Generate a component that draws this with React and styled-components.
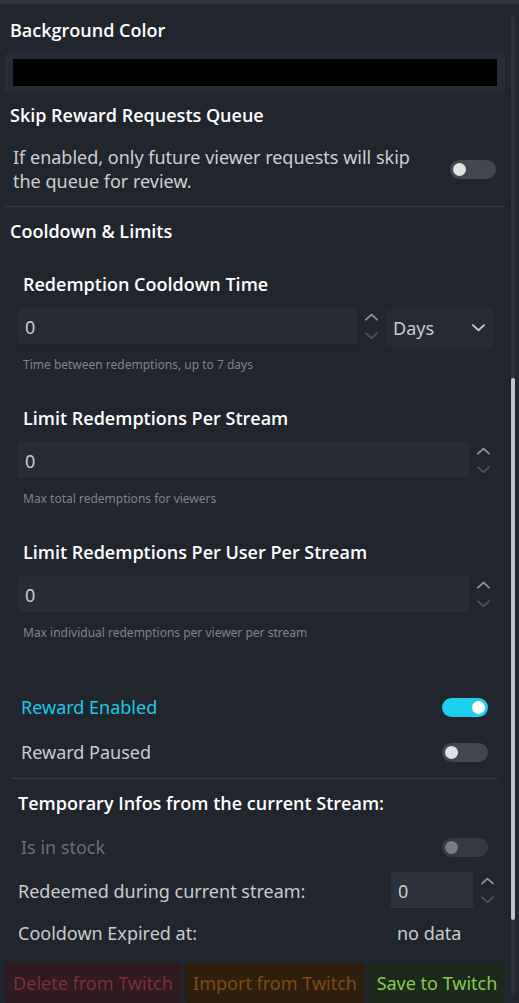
import React from 'react';
import styled, {createGlobalStyle} from 'styled-components';

const GlobalStyle = createGlobalStyle`
  html, body {
    margin: 0;
    padding: 0;
    background: #21252e;
  }
  * {
    box-sizing: border-box;
  }
`;

const Page = styled.div`
  width: 519px;
  height: 1003px;
  overflow: hidden;
  display: flex;
  flex-direction: column;
  background: #21252e;
  font-family: "Noto Sans", "Open Sans", sans-serif;
  color: #c9cbcf;
`;

const TopBar = styled.div`
  height: 4px;
  flex: none;
  background: #2e3440;
`;

const Body = styled.div`
  flex: 1;
  display: flex;
  min-height: 0;
`;

const Content = styled.div`
  width: 507px;
  padding-left: 5px;
  display: flex;
  flex-direction: column;
`;

const ScrollTrack = styled.div`
  width: 4px;
  margin: 11px 0 8px 4px;
  border-radius: 2px;
  background: #2c313b;
  display: flex;
  flex-direction: column;
`;

const ScrollThumb = styled.div`
  margin-top: 363px;
  height: 542px;
  border-radius: 2px;
  background: #c3c4c6;
`;

const Title = styled.div`
  font-family: "Open Sans", "Noto Sans", sans-serif;
  font-size: 18px;
  font-weight: 600;
  line-height: 24px;
  color: #ffffff;
  margin-top: ${p => p.$top}px;
  padding-left: ${p => p.$left || 5}px;
`;

const ColorField = styled.div`
  margin-top: 11px;
  width: 500px;
  height: 40px;
  padding: 6px 8px 7px;
  background: #262b35;
  border-radius: 3px;
`;

const ColorSwatch = styled.div`
  height: 100%;
  background: #000000;
`;

const DescRow = styled.div`
  margin-top: 18px;
  padding: 0 9px 0 8px;
  width: 500px;
  display: flex;
  align-items: center;
  justify-content: space-between;
`;

const Desc = styled.div`
  font-size: 18px;
  line-height: 24px;
  color: #cdcfd2;
  width: 420px;
`;

const Divider = styled.div`
  margin-top: ${p => p.$top}px;
  margin-left: ${p => p.$left || 0}px;
  width: ${p => p.$width}px;
  height: 1px;
  background: #353a45;
`;

const Group = styled.div`
  padding-left: 13px;
  display: flex;
  flex-direction: column;
`;

const FieldRow = styled.div`
  margin-top: 12px;
  display: flex;
  align-items: flex-start;
`;

const NumberInput = styled.div`
  width: ${p => p.$width}px;
  height: 37px;
  padding: 2px 0 0 7px;
  display: flex;
  align-items: center;
  font-size: 18px;
  color: #c9cbcf;
  background: ${p => p.$light ? '#2c313c' : '#262b36'};
  border-bottom: 1px solid #1d2028;
  border-radius: 2px;
`;

const Spinner = styled.div`
  width: 28px;
  height: 37px;
  display: flex;
  flex-direction: column;
  align-items: center;
  justify-content: center;
  gap: 11px;
`;

const Select = styled.div`
  width: 108px;
  height: 40px;
  padding: 0 8px;
  display: flex;
  align-items: center;
  justify-content: space-between;
  font-size: 18px;
  color: #c9cbcf;
  background: #252a34;
  border-radius: 3px;
`;

const Hint = styled.div`
  margin-top: ${p => p.$top}px;
  padding-left: 5px;
  font-size: 12px;
  line-height: 16px;
  color: #80848b;
`;

const ToggleRow = styled.div`
  margin-top: ${p => p.$top}px;
  padding: 0 17px 0 16px;
  width: 500px;
  display: flex;
  align-items: center;
  justify-content: space-between;
  font-size: 18px;
  line-height: 24px;
  color: ${p => p.$on ? '#1ec9e6' : p.$disabled ? '#6c7077' : '#c9cbcf'};
`;

const Track = styled.div`
  width: 46px;
  height: 19px;
  border-radius: 10px;
  padding: 0 3px;
  display: flex;
  align-items: center;
  justify-content: ${p => p.$on ? 'flex-end' : 'flex-start'};
  background: ${p => p.$on ? '#1ccfee' : p.$disabled ? '#353944' : '#424650'};
  flex: none;
`;

const Knob = styled.div`
  width: 13px;
  height: 13px;
  border-radius: 50%;
  background: ${p => p.$on ? '#ffffff' : p.$disabled ? '#7b7c7f' : '#e2e2e2'};
`;

const InfoRow = styled.div`
  margin-top: ${p => p.$top}px;
  padding-left: 13px;
  display: flex;
  align-items: center;
  font-size: 18px;
  line-height: 24px;
  color: #c9cbcf;
`;

const InfoLabel = styled.div`
  width: 373px;
`;

const InfoValue = styled.span`
  padding-left: 6px;
`;

const Actions = styled.div`
  margin-top: 18px;
  display: flex;
  gap: 4px;
`;

const ActionButton = styled.button`
  height: 40px;
  width: ${p => p.$width}px;
  border: none;
  border-radius: 3px;
  padding: 0;
  font-family: "Noto Sans", "Open Sans", sans-serif;
  font-size: 18px;
  background: ${p => p.$bg};
  color: ${p => p.$fg};
`;

function Chevron({up, color, size = 14}) {
  return (
    <svg width={size} height={size * 0.6} viewBox="0 0 14 8">
      <polyline
        points={up ? '1,7 7,1.5 13,7' : '1,1 7,6.5 13,1'}
        fill="none"
        stroke={color}
        strokeWidth="2"
        strokeLinecap="round"
        strokeLinejoin="round"
      />
    </svg>
  );
}

function Spin() {
  return (
    <Spinner>
      <Chevron up color="#8e939b" size={13}/>
      <Chevron color="#4c515a" size={13}/>
    </Spinner>
  );
}

function Toggle({on, disabled}) {
  return (
    <Track $on={on} $disabled={disabled}>
      <Knob $on={on} $disabled={disabled}/>
    </Track>
  );
}

export default function App() {
  return (
    <Page>
      <GlobalStyle/>
      <TopBar/>
      <Body>
        <Content>
          <Title $top={14}>Background Color</Title>
          <ColorField><ColorSwatch/></ColorField>

          <Title $top={10}>Skip Reward Requests Queue</Title>
          <DescRow>
            <Desc>If enabled, only future viewer requests will skip the queue for review.</Desc>
            <Toggle/>
          </DescRow>
          <Divider $top={13} $width={500}/>

          <Title $top={12}>Cooldown &amp; Limits</Title>
          <Group>
            <Title $top={29}>Redemption Cooldown Time</Title>
            <FieldRow>
              <NumberInput $width={339}>0</NumberInput>
              <Spin/>
              <Select>
                <span>Days</span>
                <Chevron color="#c9cbcf" size={13}/>
              </Select>
            </FieldRow>
            <Hint $top={9}>Time between redemptions, up to 7 days</Hint>

            <Title $top={33}>Limit Redemptions Per Stream</Title>
            <FieldRow>
              <NumberInput $width={451}>0</NumberInput>
              <Spin/>
            </FieldRow>
            <Hint $top={12}>Max total redemptions for viewers</Hint>

            <Title $top={33}>Limit Redemptions Per User Per Stream</Title>
            <FieldRow>
              <NumberInput $width={451}>0</NumberInput>
              <Spin/>
            </FieldRow>
            <Hint $top={12}>Max individual redemptions per viewer per stream</Hint>
          </Group>

          <ToggleRow $top={54} $on>
            <span>Reward Enabled</span>
            <Toggle on/>
          </ToggleRow>
          <ToggleRow $top={21}>
            <span>Reward Paused</span>
            <Toggle/>
          </ToggleRow>
          <Divider $top={14} $left={7} $width={486}/>

          <Title $top={12} $left={13}>Temporary Infos from the current Stream:</Title>
          <ToggleRow $top={20} $disabled>
            <span>Is in stock</span>
            <Toggle disabled/>
          </ToggleRow>
          <InfoRow $top={13}>
            <InfoLabel>Redeemed during current stream:</InfoLabel>
            <NumberInput $width={82} $light>0</NumberInput>
            <Spin/>
          </InfoRow>
          <InfoRow $top={12}>
            <InfoLabel>Cooldown Expired at:</InfoLabel>
            <InfoValue>no data</InfoValue>
          </InfoRow>

          <Actions>
            <ActionButton $width={176} $bg="#2e1a20" $fg="#7c2f39">Delete from Twitch</ActionButton>
            <ActionButton $width={180} $bg="#2e1f0c" $fg="#7d4d13">Import from Twitch</ActionButton>
            <ActionButton $width={136} $bg="#1c2a1b" $fg="#8dc74c">Save to Twitch</ActionButton>
          </Actions>
        </Content>
        <ScrollTrack>
          <ScrollThumb/>
        </ScrollTrack>
      </Body>
    </Page>
  );
}
